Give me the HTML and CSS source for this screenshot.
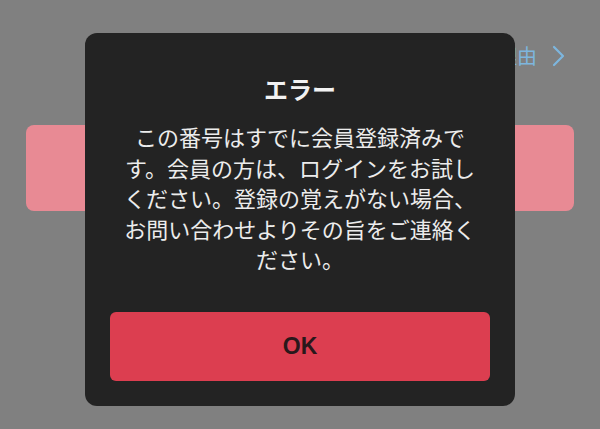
FILE: index.html
```html
<!DOCTYPE html>
<html lang="ja">
<head>
<meta charset="utf-8">
<link rel="stylesheet" href="styles.css">
</head>
<body>
<div class="page">
  <div class="top">
    <span class="link">理由</span>
    <svg class="chev" width="14" height="22" viewBox="0 0 14 22"><path d="M2 2 L11 11 L2 20" fill="none" stroke="#7db6de" stroke-width="2.2" stroke-linecap="round" stroke-linejoin="round"/></svg>
  </div>
  <div class="pinkbar"></div>
</div>
<div class="dialog">
  <div class="title">エラー</div>
  <p class="msg">この番号はすでに会員登録済みです。会員の方は、ログインをお試しください。登録の覚えがない場合、お問い合わせよりその旨をご連絡ください。</p>
  <button class="ok">OK</button>
</div>
</body>
</html>
```

FILE: styles.css
```css
html, body {
  margin: 0;
  padding: 0;
  width: 600px;
  height: 429px;
  overflow: hidden;
  background: #808080;
  font-family: "Noto Sans CJK JP", "Noto Sans", sans-serif;
}
.page {
  padding: 44px 26px 0;
}
.top {
  display: flex;
  justify-content: flex-end;
  align-items: center;
  gap: 15px;
  height: 24px;
  padding-right: 8px;
}
.link {
  color: #7db6de;
  font-size: 20px;
  line-height: 24px;
}
.pinkbar {
  margin-top: 57px;
  height: 86px;
  border-radius: 8px;
  background: #e88a94;
}
.dialog {
  position: absolute;
  left: 85px;
  top: 33px;
  width: 430px;
  box-sizing: border-box;
  padding: 40px 25px 25px;
  background: #232323;
  border-radius: 12px;
  display: flex;
  flex-direction: column;
  align-items: center;
}
.title {
  color: #f2f2f2;
  font-size: 24px;
  font-weight: bold;
  line-height: 32px;
}
.msg {
  margin: 16px 0 0;
  width: 362px;
  color: #ececec;
  font-size: 22px;
  line-height: 30.5px;
  text-align: center;
}
.ok {
  margin-top: 38px;
  width: 380px;
  height: 69px;
  border: none;
  border-radius: 6px;
  background: #dc3e50;
  color: #2a181b;
  font-family: "Liberation Sans", Arial, sans-serif;
  font-weight: bold;
  font-size: 23px;
}
```
